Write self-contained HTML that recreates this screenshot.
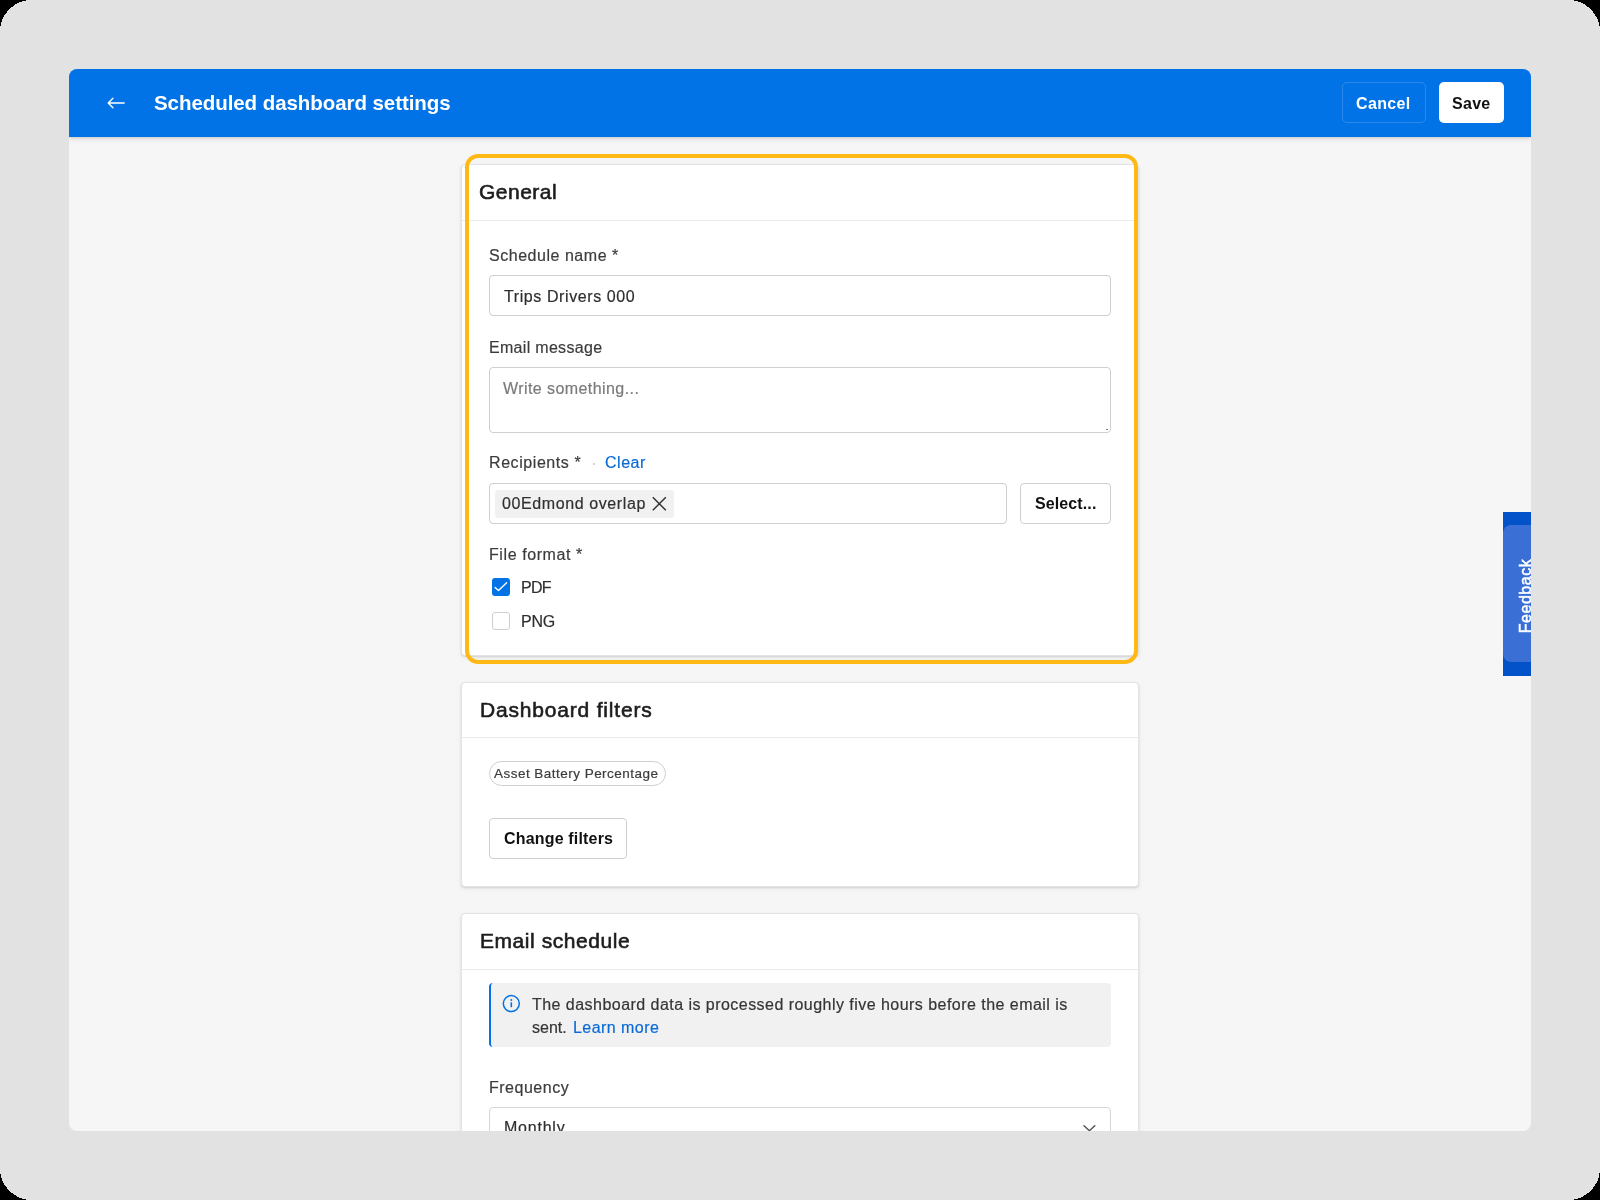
<!DOCTYPE html>
<html><head><meta charset="utf-8"><style>
*{box-sizing:border-box;margin:0;padding:0}
html,body{width:1600px;height:1200px;background:#000;overflow:hidden;font-family:"Liberation Sans",sans-serif}
.frame{position:absolute;left:0;top:0;width:1600px;height:1200px;background:#e2e2e2}
.win{position:absolute;left:69px;top:69px;width:1462px;height:1062px;background:#f6f6f6;border-radius:8px;overflow:hidden}
.a{position:absolute}
.t{position:absolute;white-space:pre;will-change:transform}
.header{position:absolute;left:69px;top:69px;width:1462px;height:68px;background:#0273e6;box-shadow:0 1px 2px rgba(0,0,0,0.10),0 2px 6px rgba(0,0,0,0.10)}
.card{position:absolute;left:461px;width:678px;background:#fff;border:1px solid #e3e3e3;border-radius:4px;box-shadow:0 1px 2px rgba(0,0,0,0.12),0 2px 6px rgba(0,0,0,0.05)}
.div{position:absolute;left:462px;width:676px;height:1px;background:#ebebeb}
.inp{position:absolute;background:#fff;border:1px solid #cfcfcf;border-radius:4px}
.btn{position:absolute;background:#fff;border:1px solid #cfcfcf;border-radius:4px}
</style></head><body>
<div class="frame"></div>
<svg class="a" style="left:0;top:0;z-index:50" width="1600" height="1200" viewBox="0 0 1600 1200" shape-rendering="crispEdges">
<path d="M0 0 H31.5 A31.5 31.5 0 0 0 0 31.5 Z M1600 0 V31.5 A31.5 31.5 0 0 0 1568.5 0 Z M1600 1200 H1568.5 A31.5 31.5 0 0 0 1600 1168.5 Z M0 1200 V1168.5 A31.5 31.5 0 0 0 31.5 1200 Z" fill="#000"/>
</svg>
<div class="win"><div class="a" style="left:-69px;top:-69px;width:1600px;height:1200px">
<div class="header"></div>
<!-- back arrow -->
<svg class="a" style="left:100px;top:90px" width="35" height="26" viewBox="100 90 35 26">
<path d="M124.2 103 H108.6 M112.9 98.3 L108.2 103 L112.9 107.7" stroke="#fff" stroke-width="1.35" fill="none" stroke-linecap="round" stroke-linejoin="round"/>
</svg>
<div class="a" style="left:1342px;top:82px;width:84px;height:41px;border:1px solid rgba(255,255,255,0.16);border-radius:5px"></div>
<div class="a" style="left:1439px;top:82px;width:65px;height:41px;background:#fff;border-radius:5px"></div>

<!-- General card -->
<div class="card" style="top:164px;height:492px"></div>
<div class="div" style="top:220px"></div>
<div class="inp" style="left:489px;top:275px;width:622px;height:41px"></div>
<div class="inp" style="left:489px;top:367px;width:622px;height:66px"></div>
<div class="a" style="left:1106.2px;top:428.6px;width:2px;height:1.6px;border-radius:1px;background:#6a6a6a"></div>
<div class="a" style="left:592.5px;top:462.5px;width:2px;height:2px;border-radius:50%;background:#c4c4c4"></div>
<div class="inp" style="left:489px;top:483px;width:518px;height:41px"></div>
<div class="a" style="left:495px;top:490px;width:179px;height:28px;background:#f1f1f1;border-radius:3px"></div>
<svg class="a" style="left:650px;top:495px" width="18" height="18" viewBox="0 0 18 18"><path d="M2.8 2.2 L15.8 15.2 M15.8 2.2 L2.8 15.2" stroke="#333" stroke-width="1.5" fill="none"/></svg>
<div class="btn" style="left:1020px;top:483px;width:91px;height:41px"></div>
<div class="a" style="left:492px;top:578px;width:18px;height:18px;background:#0273e6;border-radius:3px"></div>
<svg class="a" style="left:492px;top:578px" width="18" height="18" viewBox="0 0 18 18"><path d="M3.1 9.5 L6.5 12.5 L14.6 4.7" stroke="#fff" stroke-width="1.4" fill="none" stroke-linecap="round" stroke-linejoin="round"/></svg>
<div class="a" style="left:492px;top:612px;width:18px;height:18px;background:#fff;border:1px solid #cfcfcf;border-radius:3px"></div>

<!-- highlight -->
<div class="a" style="left:465px;top:154px;width:673px;height:510px;border:4px solid #ffb914;border-radius:13px"></div>

<!-- Dashboard filters card -->
<div class="card" style="top:682px;height:205px"></div>
<div class="div" style="top:737px"></div>
<div class="a" style="left:489px;top:761px;width:177px;height:25px;border:1px solid #cfcfcf;border-radius:13px;background:#fff"></div>
<div class="btn" style="left:489px;top:818px;width:138px;height:41px"></div>

<!-- Email schedule card -->
<div class="card" style="top:913px;height:400px"></div>
<div class="div" style="top:969px"></div>
<div class="a" style="left:489px;top:983px;width:622px;height:64px;background:#f1f1f1;border-left:2px solid #0273e6;border-radius:4px"></div>
<svg class="a" style="left:501px;top:993px" width="22" height="22" viewBox="0 0 22 22"><circle cx="10.3" cy="10.6" r="8" stroke="#0273e6" stroke-width="1.5" fill="none"/><path d="M10.3 9.3 V14.2" stroke="#0273e6" stroke-width="1.6"/><circle cx="10.3" cy="6.9" r="1" fill="#0273e6"/></svg>
<div class="inp" style="left:489px;top:1107px;width:622px;height:41px;border-color:#d6d6d6"></div>
<svg class="a" style="left:1080px;top:1118px" width="20" height="16" viewBox="0 0 20 16"><path d="M4 7.7 L9.4 12.7 L14.8 7.7" stroke="#555" stroke-width="1.5" fill="none" stroke-linecap="round" stroke-linejoin="round"/></svg>

<div class="t" style="left:153.77px;top:92.95px;font-size:20.5px;line-height:20.5px;font-weight:700;color:#ffffff;letter-spacing:-0.067px;">Scheduled dashboard settings</div>
<div class="t" style="left:1356.04px;top:96.06px;font-size:16px;line-height:16px;font-weight:700;color:#ffffff;letter-spacing:0.362px;">Cancel</div>
<div class="t" style="left:1452.04px;top:96.06px;font-size:16px;line-height:16px;font-weight:700;color:#111111;letter-spacing:0.302px;">Save</div>
<div class="t" style="left:479.24px;top:181.12px;font-size:21px;line-height:21px;font-weight:400;color:#1d1d1d;letter-spacing:0.494px;-webkit-text-stroke:0.6px #1d1d1d;">General</div>
<div class="t" style="left:488.79px;top:247.66px;font-size:16px;line-height:16px;font-weight:400;color:#3c3c3c;letter-spacing:0.530px;-webkit-text-stroke:0.2px #3c3c3c;">Schedule name *</div>
<div class="t" style="left:504.04px;top:288.76px;font-size:16px;line-height:16px;font-weight:400;color:#2e2e2e;letter-spacing:0.591px;-webkit-text-stroke:0.2px #2e2e2e;">Trips Drivers 000</div>
<div class="t" style="left:488.79px;top:339.56px;font-size:16px;line-height:16px;font-weight:400;color:#3c3c3c;letter-spacing:0.305px;-webkit-text-stroke:0.2px #3c3c3c;">Email message</div>
<div class="t" style="left:503.44px;top:381.26px;font-size:16px;line-height:16px;font-weight:400;color:#7a7a7a;letter-spacing:0.426px;-webkit-text-stroke:0.2px #7a7a7a;">Write something...</div>
<div class="t" style="left:488.64px;top:455.46px;font-size:16px;line-height:16px;font-weight:400;color:#3c3c3c;letter-spacing:0.573px;-webkit-text-stroke:0.2px #3c3c3c;">Recipients *</div>
<div class="t" style="left:605.24px;top:455.46px;font-size:16px;line-height:16px;font-weight:400;color:#0a6ad6;letter-spacing:0.511px;-webkit-text-stroke:0.2px #0a6ad6;">Clear</div>
<div class="t" style="left:502.04px;top:496.06px;font-size:16px;line-height:16px;font-weight:400;color:#303030;letter-spacing:0.598px;-webkit-text-stroke:0.2px #303030;">00Edmond overlap</div>
<div class="t" style="left:1034.54px;top:496.46px;font-size:16px;line-height:16px;font-weight:700;color:#111111;letter-spacing:0.112px;">Select...</div>
<div class="t" style="left:488.84px;top:547.26px;font-size:16px;line-height:16px;font-weight:400;color:#3c3c3c;letter-spacing:0.586px;-webkit-text-stroke:0.2px #3c3c3c;">File format *</div>
<div class="t" style="left:521.04px;top:580.36px;font-size:16px;line-height:16px;font-weight:400;color:#2e2e2e;letter-spacing:-0.735px;-webkit-text-stroke:0.2px #2e2e2e;">PDF</div>
<div class="t" style="left:521.04px;top:613.56px;font-size:16px;line-height:16px;font-weight:400;color:#2e2e2e;letter-spacing:-0.196px;-webkit-text-stroke:0.2px #2e2e2e;">PNG</div>
<div class="t" style="left:479.64px;top:699.22px;font-size:21px;line-height:21px;font-weight:400;color:#1d1d1d;letter-spacing:0.814px;-webkit-text-stroke:0.6px #1d1d1d;">Dashboard filters</div>
<div class="t" style="left:494.49px;top:766.87px;font-size:13.5px;line-height:13.5px;font-weight:400;color:#3c3c3c;letter-spacing:0.473px;-webkit-text-stroke:0.2px #3c3c3c;">Asset Battery Percentage</div>
<div class="t" style="left:503.54px;top:831.36px;font-size:16px;line-height:16px;font-weight:700;color:#111111;letter-spacing:0.176px;">Change filters</div>
<div class="t" style="left:479.74px;top:930.42px;font-size:21px;line-height:21px;font-weight:400;color:#1d1d1d;letter-spacing:0.560px;-webkit-text-stroke:0.6px #1d1d1d;">Email schedule</div>
<div class="t" style="left:532.04px;top:997.26px;font-size:16px;line-height:16px;font-weight:400;color:#353535;letter-spacing:0.462px;-webkit-text-stroke:0.2px #353535;">The dashboard data is processed roughly five hours before the email is</div>
<div class="t" style="left:532.04px;top:1019.66px;font-size:16px;line-height:16px;font-weight:400;color:#353535;letter-spacing:0.000px;-webkit-text-stroke:0.2px #353535;">sent.</div>
<div class="t" style="left:573.44px;top:1019.66px;font-size:16px;line-height:16px;font-weight:400;color:#0a6ad6;letter-spacing:0.450px;-webkit-text-stroke:0.2px #0a6ad6;">Learn more</div>
<div class="t" style="left:488.84px;top:1079.56px;font-size:16px;line-height:16px;font-weight:400;color:#3c3c3c;letter-spacing:0.511px;-webkit-text-stroke:0.2px #3c3c3c;">Frequency</div>
<div class="t" style="left:503.84px;top:1120.16px;font-size:16px;line-height:16px;font-weight:400;color:#2e2e2e;letter-spacing:0.775px;-webkit-text-stroke:0.2px #2e2e2e;">Monthly</div>


<!-- Feedback tab -->
<div class="a" style="left:1503px;top:512px;width:28px;height:164px;background:#0452c9;overflow:hidden">
  <div class="a" style="left:0;top:13px;width:40px;height:137px;background:#3a6fd6;border-radius:8px"></div>
  <div class="t" style="left:-37px;top:73.5px;width:120px;height:20px;transform:rotate(-90deg);font-size:16px;line-height:20px;font-weight:400;color:#fff;text-align:center;letter-spacing:0.55px;-webkit-text-stroke:0.45px #fff">Feedback</div>
</div>
</div></div>
</body></html>
